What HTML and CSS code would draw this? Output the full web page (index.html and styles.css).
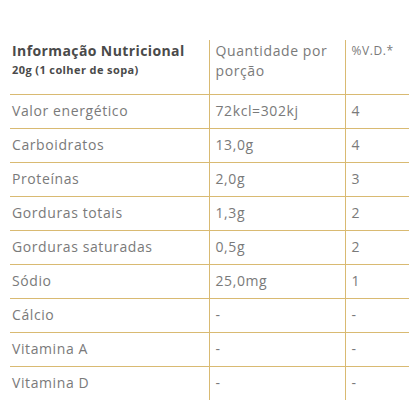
FILE: index.html
```html
<!DOCTYPE html>
<html lang="pt">
<head>
<meta charset="utf-8">
<link rel="stylesheet" href="styles.css">
</head>
<body>
<table class="nutri">
  <colgroup><col class="w1"><col class="w2"><col class="w3"></colgroup>
  <thead>
    <tr>
      <th><div class="title">Informação Nutricional</div><div class="sub">20g (1 colher de sopa)</div></th>
      <th>Quantidade por porção</th>
      <th class="vd">%V.D.*</th>
    </tr>
  </thead>
  <tbody>
    <tr><td>Valor energético</td><td>72kcl=302kj</td><td>4</td></tr>
    <tr><td>Carboidratos</td><td>13,0g</td><td>4</td></tr>
    <tr><td>Proteínas</td><td>2,0g</td><td>3</td></tr>
    <tr><td>Gorduras totais</td><td>1,3g</td><td>2</td></tr>
    <tr><td>Gorduras saturadas</td><td>0,5g</td><td>2</td></tr>
    <tr><td>Sódio</td><td>25,0mg</td><td>1</td></tr>
    <tr><td>Cálcio</td><td>-</td><td>-</td></tr>
    <tr><td>Vitamina A</td><td>-</td><td>-</td></tr>
    <tr><td>Vitamina D</td><td>-</td><td>-</td></tr>
  </tbody>
</table>
</body>
</html>
```
FILE: styles.css
```css
html, body { margin: 0; padding: 0; background: #fff; }
body { padding: 40px 11px 0 10px; font-family: "Open Sans", sans-serif; }
.nutri { border-collapse: collapse; width: 399px; table-layout: fixed; color: #7a7a7a; font-size: 14px; letter-spacing: 0.6px; }
.w1 { width: 199px; }
.w2 { width: 136px; }
.w3 { width: 64px; }
.nutri th, .nutri td { box-sizing: border-box; text-align: left; vertical-align: top; padding: 0 0 0 6px; border: 1px solid #d9ba72; font-weight: normal; white-space: nowrap; }
.nutri th { white-space: normal; }
.nutri tr > :first-child { border-left: none; padding-left: 2px; }
.nutri tr > :last-child { border-right: none; }
.nutri thead th { border-top: none; height: 54px; padding-top: 1px; line-height: 20px; }
.nutri tbody tr:last-child td { border-bottom: none; }
.nutri td { height: 34px; line-height: 32px; padding-top: 0; }
.title { font-weight: 700; color: #4a4a4a; font-size: 14px; line-height: 20px; letter-spacing: 0.4px; }
.sub { font-weight: 700; color: #4a4a4a; font-size: 11px; line-height: 18px; letter-spacing: 0.4px; }
.nutri th.vd { font-size: 12px; }
```
